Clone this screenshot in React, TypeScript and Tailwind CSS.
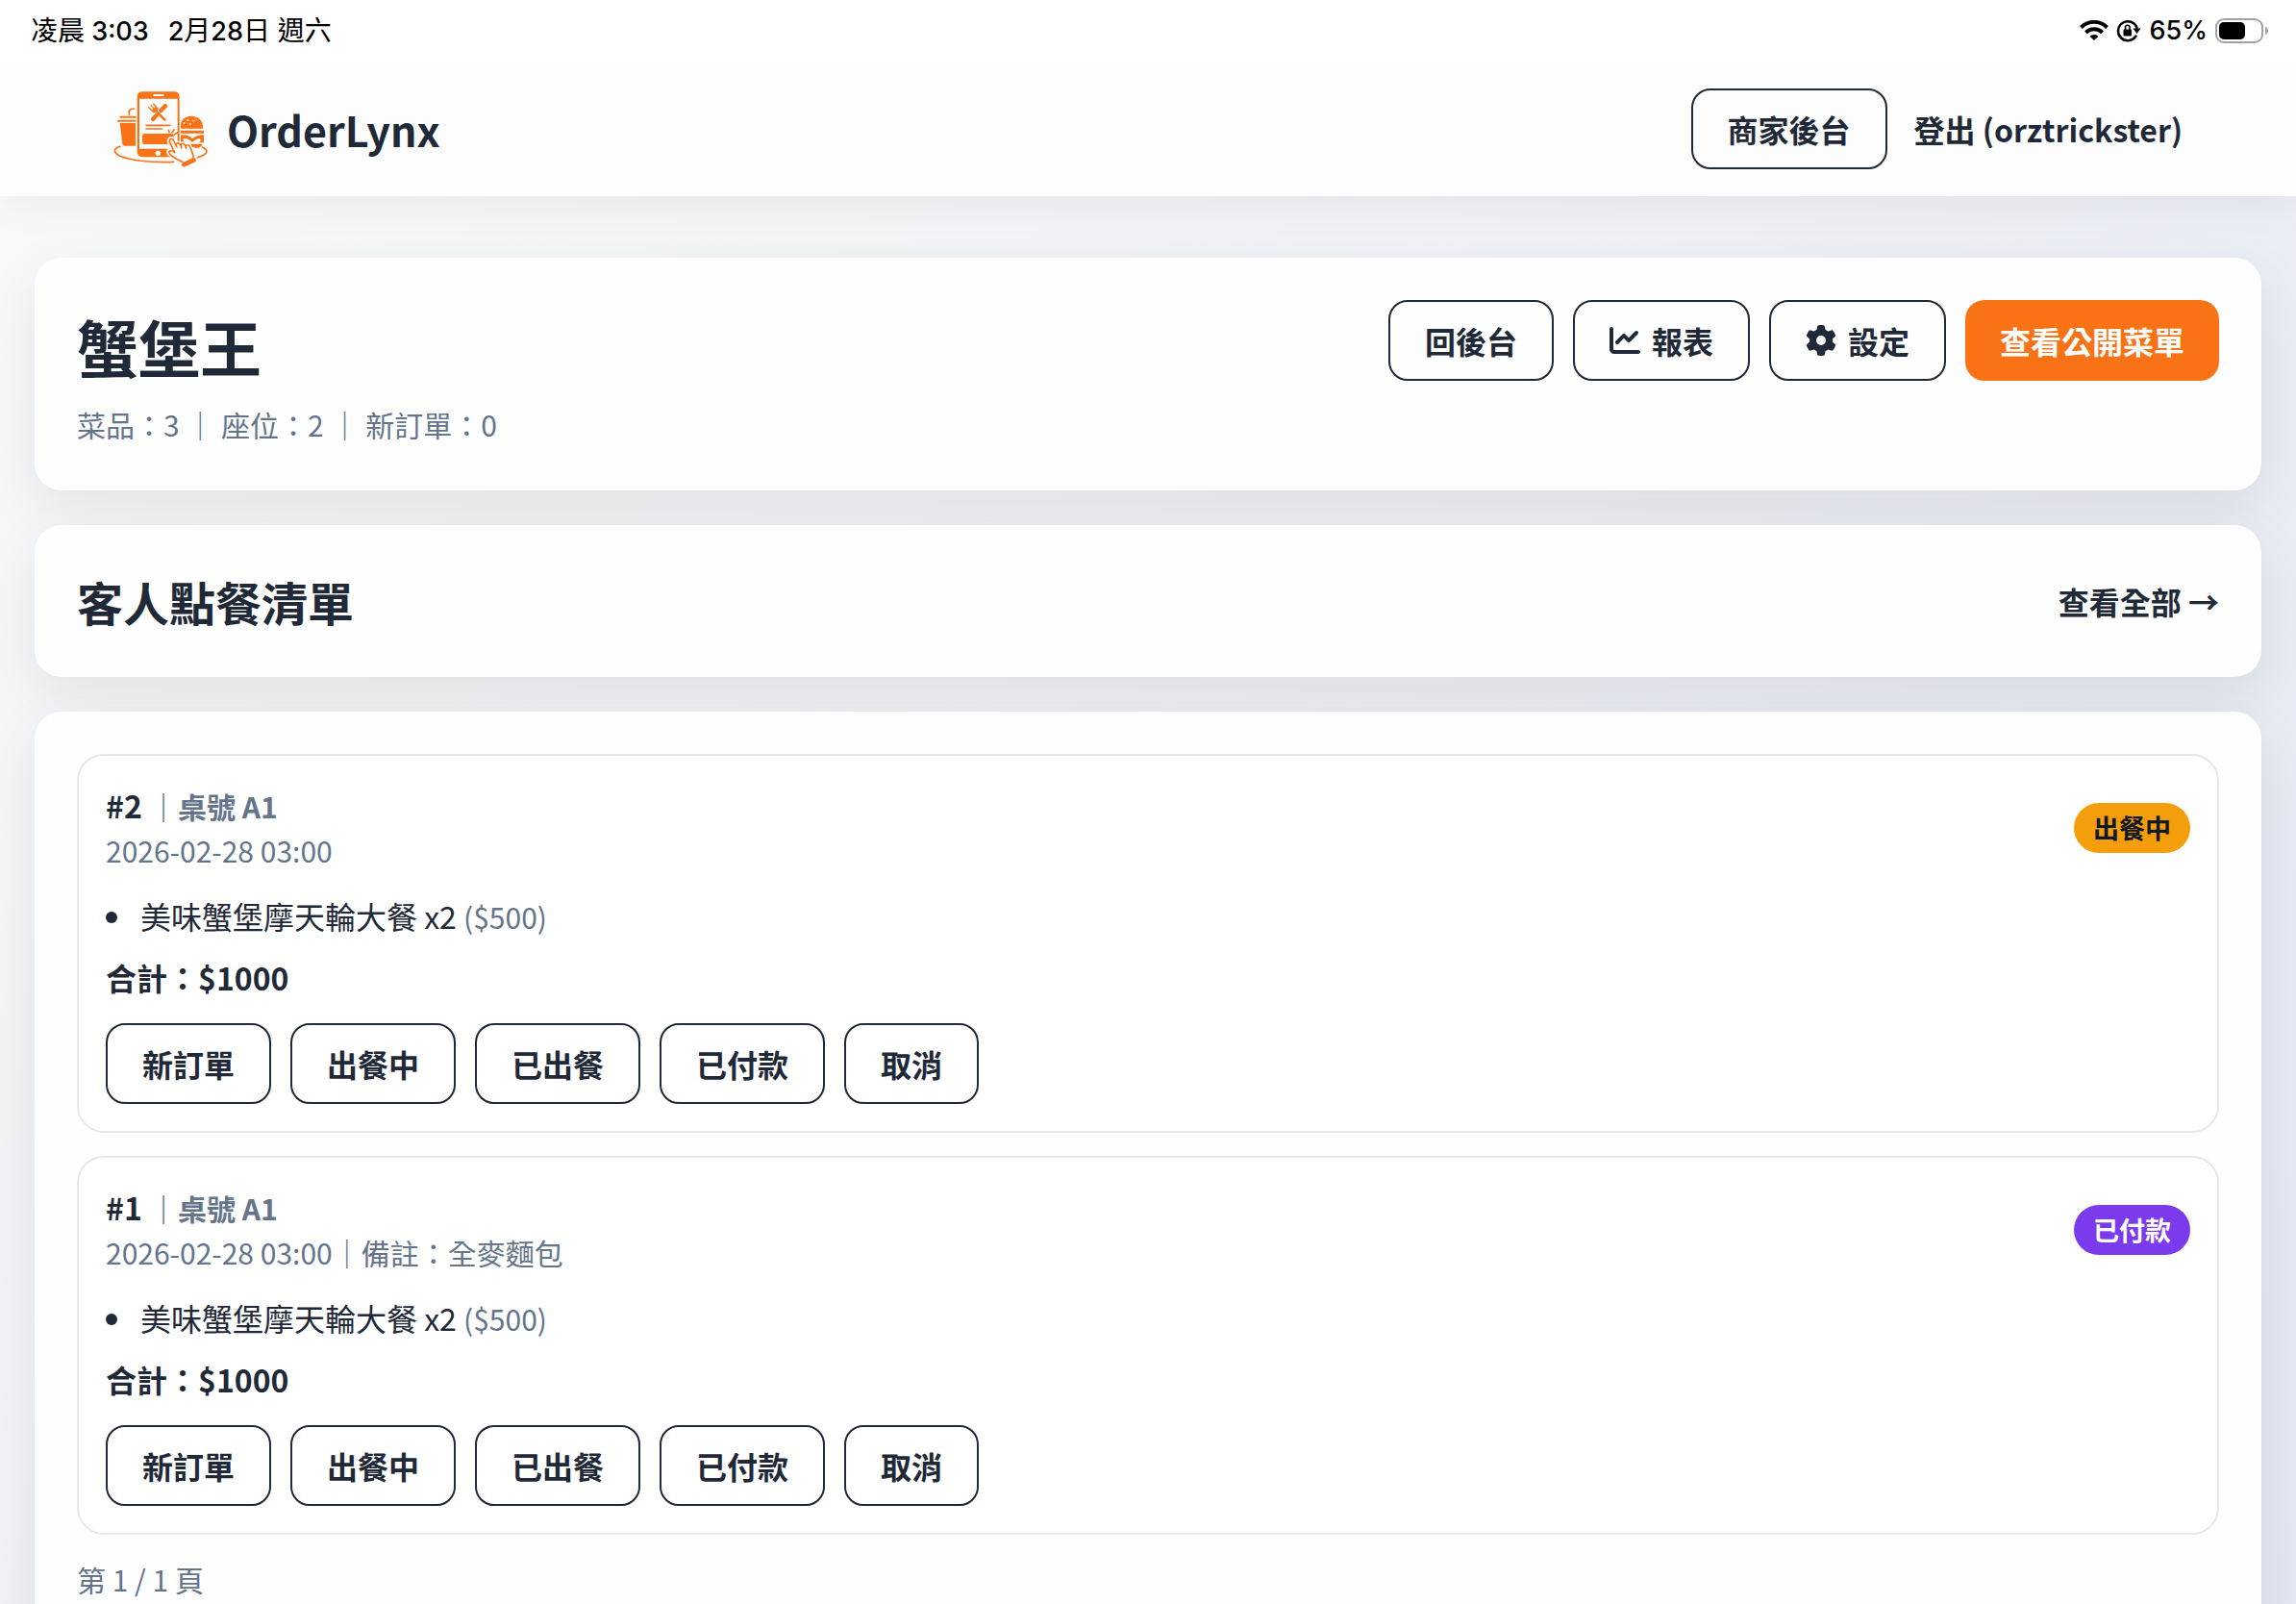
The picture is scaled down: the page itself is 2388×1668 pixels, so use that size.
import type { ReactNode } from "react";
import { FaChartLine, FaGear } from "react-icons/fa6";

const buttonBase =
  "inline-flex h-[84px] items-center justify-center gap-3 rounded-[20px] px-9 text-[32px] font-bold leading-[48px] whitespace-nowrap";

function OutlineButton({ children }: { children: ReactNode }) {
  return (
    <button type="button" className={`${buttonBase} border-2 border-[#1f2937]`}>
      {children}
    </button>
  );
}

function Card({ children, className = "" }: { children: ReactNode; className?: string }) {
  return (
    <section
      className={`rounded-[28px] bg-[#fefefe] p-11 shadow-[0_20px_60px_rgba(0,0,0,0.08)] ${className}`}
    >
      {children}
    </section>
  );
}

function Logo() {
  return (
    <svg viewBox="42 40 294 240" className="h-20 w-[98px]" fill="none" aria-hidden="true">
      <g stroke="#f97316" strokeLinecap="round" strokeLinejoin="round">
        <path d="M62 215C34 224 44 243 88 253C128 262 178 265 230 263" strokeWidth="5" />
        <path d="M319 217C340 226 338 240 305 249" strokeWidth="5" />
        <path d="M91 116C88 102 94 97 107 97" strokeWidth="5" />
        <path d="M64 123H110M57 135H110" strokeWidth="6" />
        <path d="M144 149H219M144 160H193" strokeWidth="5" />
      </g>
      <path d="M62 142H111V213H76Q71 213 70 207Z" fill="#f97316" />
      <path
        fillRule="evenodd"
        d="M134 44H231Q248 44 248 61V230Q248 248 231 248H134Q116 248 116 230V61Q116 44 134 44ZM123 66V222H242V66Z"
        fill="#f97316"
      />
      <rect x="165" y="52" width="35" height="6" rx="3" fill="#fff" />
      <circle cx="181" cy="236" r="8" fill="#fff" />
      <rect x="132" y="175" width="98" height="33" rx="7" fill="#f97316" />
      <g stroke="#f97316" strokeLinecap="round">
        <path d="M204 88L190 103M178 116L165 130" strokeWidth="13" />
        <path d="M175 103L202 132" strokeWidth="9" stroke="#fff" />
        <path d="M172 101L202 132" strokeWidth="8" />
        <path d="M152 93L165 106M159 87L172 101M167 82L180 97" strokeWidth="4" />
        <path d="M163 104Q172 112 179 98L172 94Z" strokeWidth="4" fill="#f97316" />
      </g>
      <path d="M252 155V146C256 111 317 111 321 151V159H252Z" fill="#f97316" />
      <g fill="#fff">
        <circle cx="263" cy="142" r="3" />
        <circle cx="274" cy="133" r="3" />
        <circle cx="281" cy="145" r="3" />
        <circle cx="292" cy="135" r="3" />
        <circle cx="301" cy="131" r="2" />
      </g>
      <path d="M252 165H324V174H252ZM252 179H262C274 180 280 184 288 190C298 184 306 179 324 179V203H305C314 200 318 194 310 190C302 190 296 197 288 201C281 196 274 189 262 190C256 192 262 200 268 203H252ZM276 207H319C318 218 305 222 291 218Z" fill="#f97316" />
      <path
        d="M216 198C218 188 227 189 230 198L237 213C238 203 250 203 252 211C256 204 265 206 266 214C272 207 280 212 282 220L291 244L257 266L218 238C209 229 218 224 232 237L216 198Z"
        fill="#fff"
        stroke="#fff"
        strokeWidth="14"
        strokeLinejoin="round"
      />
      <path
        d="M258 264C250 258 231 253 219 240C210 230 219 223 233 234L217 200C216 189 227 189 230 197L240 217M237 211C238 201 250 203 252 213L255 220M252 211C256 203 265 206 267 215L269 221M266 213C273 207 281 212 283 221C287 231 290 237 291 248"
        stroke="#f97316"
        strokeWidth="5"
        strokeLinecap="round"
        strokeLinejoin="round"
      />
      <path d="M259 266L292 250Q297 250 298 257V262L263 278Q257 278 255 270Z" fill="#f97316" stroke="#f97316" strokeWidth="2" />
      <path d="M216 171L214 164M225 172L231 163M232 178L241 172" stroke="#f97316" strokeWidth="5" strokeLinecap="round" />
    </svg>
  );
}

function WifiIcon() {
  return (
    <svg viewBox="0 0 30 22" className="h-[22px] w-[30px]" fill="none" stroke="#000" strokeWidth="4">
      <path d="M1.5 7.5A19 19 0 0 1 28.500 7.500" />
      <path d="M6.500 12.800A12 12 0 0 1 23.500 12.800" />
      <path d="M15 21L10.500 16.700A6.500 6.500 0 0 1 19.500 16.700Z" fill="#000" stroke="none" />
    </svg>
  );
}

function RotationLockIcon() {
  return (
    <svg viewBox="0 0 26 24" className="h-6 w-[26px]" fill="none" stroke="#000">
      <path d="M20.500 17.500A10 10 0 1 1 21.500 9" strokeWidth="2.500" strokeLinecap="round" />
      <path d="M17.500 9.500H25.500L21.500 15Z" fill="#000" stroke="none" />
      <rect x="7.500" y="10.500" width="8.500" height="7" rx="1" fill="#000" stroke="none" />
      <path d="M9.500 11V8.500A2.200 2.200 0 0 1 14 8.500V11" strokeWidth="1.600" />
    </svg>
  );
}

function BatteryIcon() {
  return (
    <svg viewBox="0 0 56 26" className="h-[26px] w-14" fill="none">
      <rect x="1" y="1" width="48" height="24" rx="8" stroke="#a3a3a3" strokeWidth="2" />
      <rect x="4" y="4" width="27" height="18" rx="5" fill="#000" />
      <path d="M52 9C56 10 56 16 52 17Z" fill="#a3a3a3" />
    </svg>
  );
}

function Digits({ children }: { children: ReactNode }) {
  return <span className="text-[27px] font-medium">{children}</span>;
}

function StatusBar() {
  return (
    <div className="relative z-10 flex h-16 items-center justify-between bg-white pr-7 pl-8 font-[Inter,'Noto_Sans_CJK_TC',sans-serif] text-[28px] text-black">
      <div className="flex gap-5">
        <span>
          凌晨<Digits> 3:03</Digits>
        </span>
        <span>
          <Digits>2</Digits>月<Digits>28</Digits>日 週六
        </span>
      </div>
      <div className="flex items-center gap-2">
        <WifiIcon />
        <RotationLockIcon />
        <Digits>65%</Digits>
        <BatteryIcon />
      </div>
    </div>
  );
}

type Order = { id: number; table: string; time: string; note?: string; badge: string; badgeStyle: string };

const orders: Order[] = [
  { id: 2, table: "A1", time: "2026-02-28 03:00", badge: "出餐中", badgeStyle: "bg-[#f59e0b] text-[#111827]" },
  { id: 1, table: "A1", time: "2026-02-28 03:00", note: "全麥麵包", badge: "已付款", badgeStyle: "bg-[#7c3aed] text-white" },
];

const statuses = ["新訂單", "出餐中", "已出餐", "已付款", "取消"];

function OrderCard({ order }: { order: Order }) {
  return (
    <article className="rounded-[28px] border-2 border-[#e5e7eb] bg-white p-7">
      <div className="flex items-center justify-between">
        <div>
          <h3 className="text-[32px] leading-[47px] font-bold">
            #{order.id} <span className="text-[30px] leading-none text-[#64748b]">｜桌號 {order.table}</span>
          </h3>
          <p className="text-[30px] leading-[47px] text-[#64748b]">
            {order.time}
            {order.note && `｜備註：${order.note}`}
          </p>
        </div>
        <span className={`rounded-full px-5 text-[27px] leading-[52px] font-bold ${order.badgeStyle}`}>
          {order.badge}
        </span>
      </div>
      <ul className="mt-5 text-[32px] leading-[48px]">
        <li className="flex items-center gap-6">
          <span className="mt-1 size-3 rounded-full bg-[#1f2937]" />
          <span>
            美味蟹堡摩天輪大餐 x2 <span className="text-[30px] leading-none text-[#64748b]">($500)</span>
          </span>
        </li>
      </ul>
      <p className="mt-4 text-[32px] leading-[48px] font-bold">合計：$1000</p>
      <div className="mt-6 flex flex-wrap gap-5">
        {statuses.map((status) => (
          <OutlineButton key={status}>{status}</OutlineButton>
        ))}
      </div>
    </article>
  );
}

export default function App() {
  return (
    <div className="min-h-screen bg-[linear-gradient(135deg,#f8fafc,#edf1f5_50%,#e2e7f2)] font-['Noto_Sans_CJK_TC',sans-serif] text-[#1f2937]">
      <StatusBar />
      <header className="flex h-[140px] items-center justify-between bg-[#fdfdfd] px-[118px] shadow-[0_8px_40px_rgba(0,0,0,0.06)]">
        <a href="#" className="flex items-center gap-5 text-[43px] leading-[66px] font-bold">
          <Logo />
          OrderLynx
        </a>
        <nav className="flex items-center gap-7">
          <OutlineButton>商家後台</OutlineButton>
          <a href="#" className="text-[32px] leading-[48px] font-bold">
            登出 (orztrickster)
          </a>
        </nav>
      </header>
      <main className="flex flex-col gap-9 px-9 py-16">
        <Card className="flex items-start justify-between">
          <div>
            <h1 className="text-[64px] leading-[94px] font-bold">蟹堡王</h1>
            <p className="mt-3 mb-0.5 text-[30px] leading-[46px] text-[#64748b]">菜品：3 ｜ 座位：2 ｜ 新訂單：0</p>
          </div>
          <div className="flex gap-5">
            <OutlineButton>回後台</OutlineButton>
            <OutlineButton>
              <FaChartLine />
              報表
            </OutlineButton>
            <OutlineButton>
              <FaGear />
              設定
            </OutlineButton>
            <button type="button" className={`${buttonBase} bg-[#f97316] text-white`}>
              查看公開菜單
            </button>
          </div>
        </Card>
        <Card className="flex items-center justify-between">
          <h2 className="text-[48px] leading-[70px] font-bold">客人點餐清單</h2>
          <a href="#" className="text-[32px] leading-[48px] font-bold">
            查看全部 →
          </a>
        </Card>
        <Card className="flex flex-col gap-6">
          {orders.map((order) => (
            <OrderCard key={order.id} order={order} />
          ))}
          <p className="text-[30px] leading-[45px] text-[#64748b]">第 1 / 1 頁</p>
        </Card>
      </main>
    </div>
  );
}
